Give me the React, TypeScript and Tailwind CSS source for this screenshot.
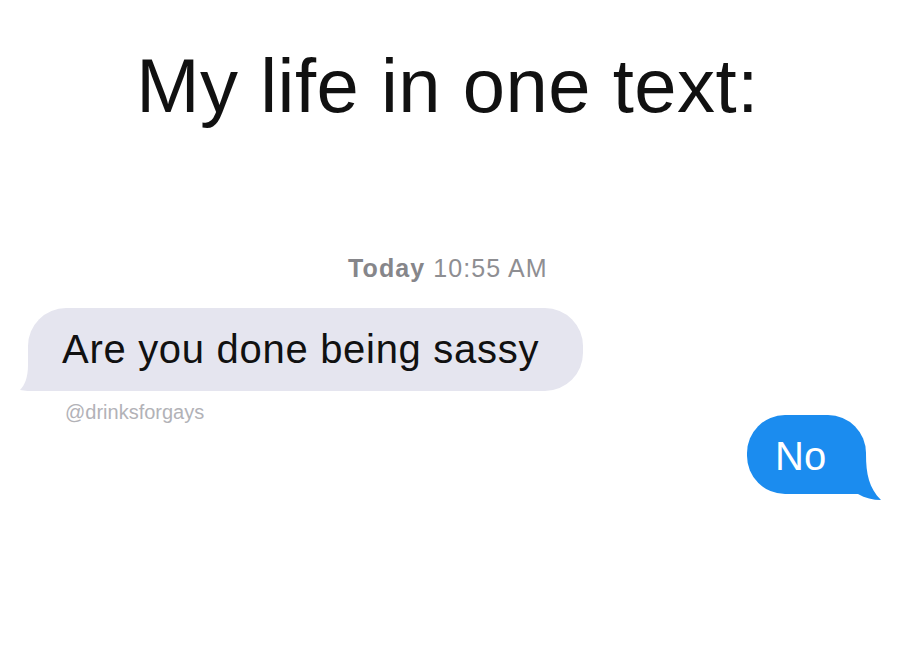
function GrayTail() {
  return (
    <svg
      className="absolute left-[-8px] bottom-0"
      width="48"
      height="40"
      viewBox="0 0 48 40"
    >
      <path d="M8 0 L48 0 L48 40 L16 40 C10 40 5 40 0 39 C5 34 8 26 8 14 Z" fill="#e5e5ef" />
    </svg>
  );
}

function BlueTail() {
  return (
    <svg
      className="absolute right-[-15px] bottom-[-6px]"
      width="56"
      height="46"
      viewBox="0 0 56 46"
    >
      <path d="M0 0 L41 0 C41 20 44 34 56 46 C48 46 40 44 33 40 L0 40 Z" fill="#1b8cef" />
    </svg>
  );
}

export default function App() {
  return (
    <div className="w-[910px] h-[664px] bg-white flex flex-col font-['Liberation_Sans',_Arial,_sans-serif] overflow-hidden">
      {/* Heading */}
      <h1 className="pt-[48px] pr-[15px] text-center text-[76px] leading-none tracking-[0.5px] text-[#111111] font-normal">
        My life in one text:
      </h1>

      {/* Timestamp */}
      <div className="mt-[132px] pl-[348px] text-[25px] leading-none tracking-[1.1px] text-[#8e8e92]">
        <span className="font-semibold text-[#86868a]">Today</span> 10:55 AM
      </div>

      {/* Incoming message */}
      <div className="mt-[27px] pl-[28px] flex">
        <div className="relative w-[555px] h-[83px] rounded-[38px] bg-[#e5e5ef] pl-[34px] pt-[21px] text-[40px] leading-none tracking-[0.7px] text-[#111111]">
          <GrayTail />
          <span className="relative">Are you done being sassy</span>
        </div>
      </div>

      {/* Handle + reply */}
      <div className="mt-[11px] pl-[65px] pr-[44px] flex items-start justify-between">
        <span className="text-[20px] leading-none text-[#b2b2b7]">@drinksforgays</span>
        <div className="relative mt-[13px] w-[119px] h-[79px] rounded-[38px] bg-[#1b8cef] pl-[28px] pt-[21px] text-[40px] leading-none text-white">
          <BlueTail />
          <span className="relative">No</span>
        </div>
      </div>
    </div>
  );
}
